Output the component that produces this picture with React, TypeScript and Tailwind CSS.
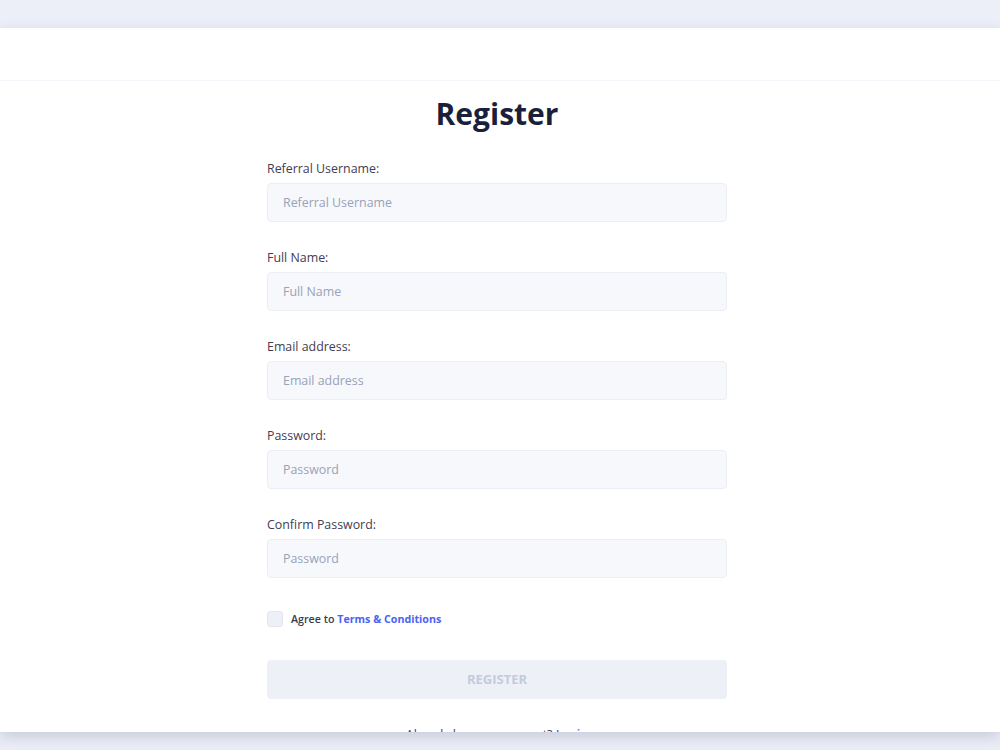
import React from "react";

const fields = [
  { label: "Referral Username:", placeholder: "Referral Username", type: "text" },
  { label: "Full Name:", placeholder: "Full Name", type: "text" },
  { label: "Email address:", placeholder: "Email address", type: "email" },
  { label: "Password:", placeholder: "Password", type: "password" },
  { label: "Confirm Password:", placeholder: "Password", type: "password" },
];

export default function App() {
  return (
    <div
      className="h-screen w-full bg-[#eceff8] pt-[28px] pb-[18px] flex flex-col"
      style={{ fontFamily: '"Open Sans", "Noto Sans", sans-serif' }}
    >
      <div className="flex-1 bg-white overflow-hidden flex flex-col shadow-[0_5px_14px_rgba(50,60,100,0.2)]">
        <header className="h-[53px] shrink-0 border-b border-[#f3f3f9] bg-white" />
        <main className="flex justify-center pr-[6px]">
          <form className="w-[460px] pt-[14px] flex flex-col" onSubmit={(e) => e.preventDefault()}>
            <h1 className="text-center text-[30px] leading-[38px] font-bold text-[#1c1f3c]">Register</h1>
            <div className="mt-[25px] flex flex-col gap-[25px]">
              {fields.map((f) => (
                <label key={f.label} className="flex flex-col">
                  <span className="text-[12.4px] leading-[22px] text-[#3f3d54]">{f.label}</span>
                  <input
                    type={f.type}
                    placeholder={f.placeholder}
                    className="mt-[3px] h-[39px] w-full rounded-[4px] border border-[#eceef5] bg-[#f7f8fc] px-[15px] text-[12.4px] text-[#3f3d54] outline-none placeholder:text-[#98a2b8]"
                  />
                </label>
              ))}
            </div>
            <div className="mt-[33px] flex items-center gap-[8px]">
              <span className="h-[16px] w-[16px] rounded-[3px] border border-[#e3e6ef] bg-[#eef0f7]" />
              <span className="text-[10.7px] leading-[16px] font-semibold text-[#3a3a4c]">
                Agree to <a className="font-bold text-[#4c62f2]">Terms &amp; Conditions</a>
              </span>
            </div>
            <button
              type="submit"
              className="mt-[33px] h-[39px] w-full rounded-[4px] bg-[#edf0f7] text-[13px] font-bold text-[#c4cbda]"
            >
              REGISTER
            </button>
            <p className="mt-[27px] text-center text-[12.4px] leading-[18px] text-[#3f3d54]">
              Already have an account? <a className="font-semibold text-[#4c62f2]">Login</a>
            </p>
          </form>
        </main>
      </div>
    </div>
  );
}
